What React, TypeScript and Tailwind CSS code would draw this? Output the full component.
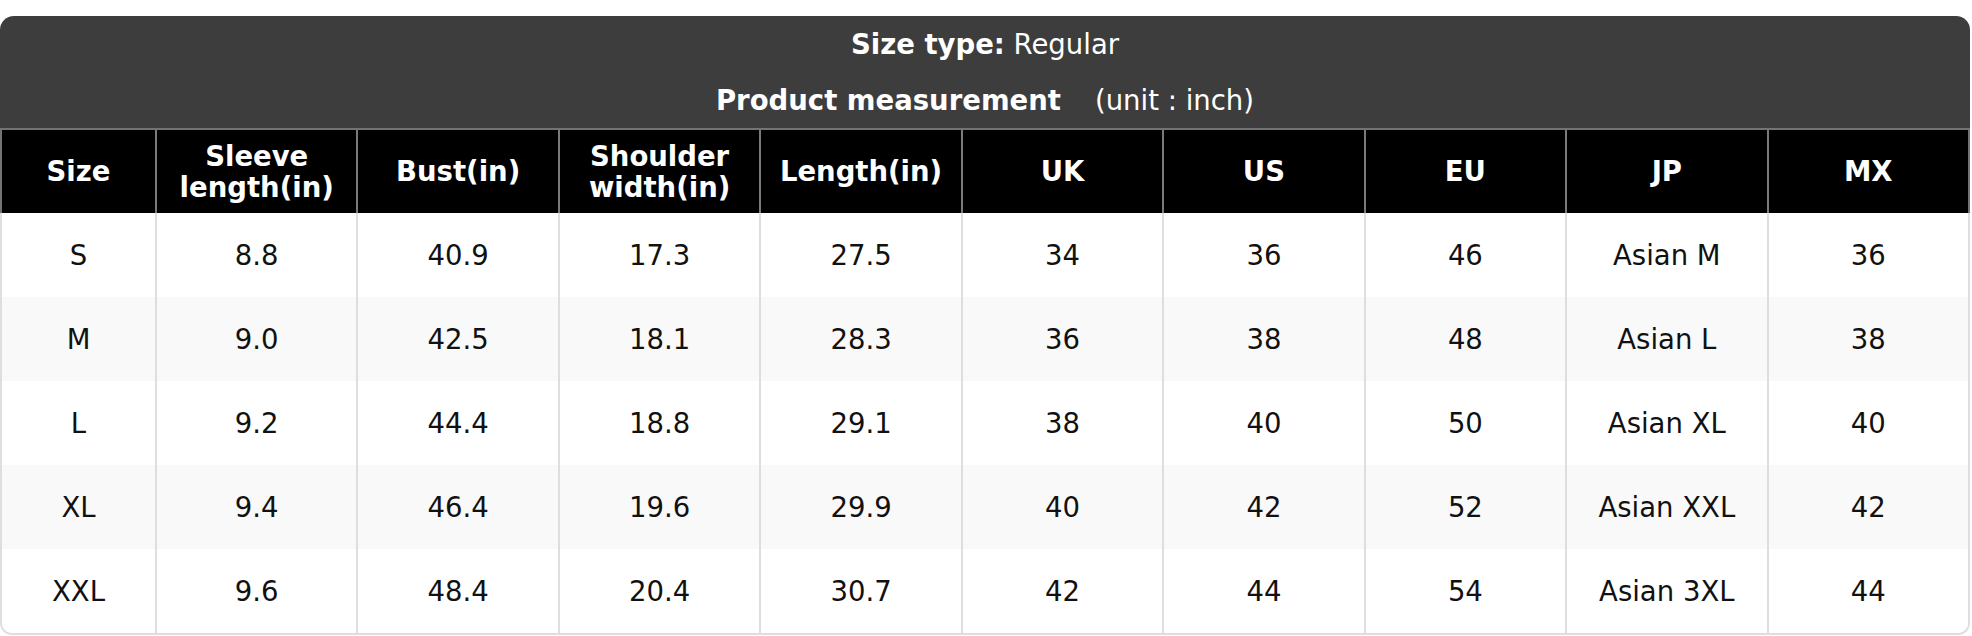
import React from 'react';

const columns = ['Size', 'Sleeve length(in)', 'Bust(in)', 'Shoulder width(in)', 'Length(in)', 'UK', 'US', 'EU', 'JP', 'MX'];

const headerLabels: React.ReactNode[] = [
  'Size',
  <>Sleeve<br />length(in)</>,
  'Bust(in)',
  <>Shoulder<br />width(in)</>,
  'Length(in)',
  'UK',
  'US',
  'EU',
  'JP',
  'MX',
];

const rows: string[][] = [
  ['S', '8.8', '40.9', '17.3', '27.5', '34', '36', '46', 'Asian M', '36'],
  ['M', '9.0', '42.5', '18.1', '28.3', '36', '38', '48', 'Asian L', '38'],
  ['L', '9.2', '44.4', '18.8', '29.1', '38', '40', '50', 'Asian XL', '40'],
  ['XL', '9.4', '46.4', '19.6', '29.9', '40', '42', '52', 'Asian XXL', '42'],
  ['XXL', '9.6', '48.4', '20.4', '30.7', '42', '44', '54', 'Asian 3XL', '44'],
];

export default function App() {
  return (
    <div className="min-h-screen bg-white pt-4 font-['DejaVu_Sans',sans-serif] text-[27.5px]">
      <div className="w-[1970px]">
        {/* Title block */}
        <div className="rounded-t-[14px] bg-[#3d3d3d] text-white">
          <div className="flex h-[56px] items-center justify-center leading-[32px]">
            <span className="font-bold">Size type:</span>
            <span>&nbsp;Regular</span>
          </div>
          <div className="flex h-[56px] items-center justify-center leading-[32px]">
            <span className="font-bold">Product measurement</span>
            <span className="ml-[34px]">(unit : inch)</span>
          </div>
        </div>

        {/* Header row */}
        <div className="grid h-[85px] grid-cols-[153px_repeat(9,minmax(0,1fr))] border-x-2 border-t-2 border-[#737373] bg-black text-white">
          {columns.map((col, i) => (
            <div
              key={col}
              className={`flex items-center justify-center text-center font-bold leading-[31px] ${
                i > 0 ? 'border-l-2 border-[#7a7a7a]' : ''
              }`}
            >
              <span>{headerLabels[i]}</span>
            </div>
          ))}
        </div>

        {/* Body rows */}
        <div className="overflow-hidden rounded-b-[12px] border-x-2 border-b-2 border-[#dedede]">
          {rows.map((row, r) => (
            <div
              key={row[0]}
              className={`grid h-[84px] grid-cols-[153px_repeat(9,minmax(0,1fr))] text-[#111] ${
                r % 2 === 1 ? 'bg-[#f9f9f9]' : 'bg-white'
              }`}
            >
              {row.map((cell, i) => (
                <div
                  key={i}
                  className={`flex items-center justify-center leading-[32px] ${
                    i > 0 ? 'border-l-2 border-[#dedede]' : ''
                  }`}
                >
                  {cell}
                </div>
              ))}
            </div>
          ))}
        </div>
      </div>
    </div>
  );
}
